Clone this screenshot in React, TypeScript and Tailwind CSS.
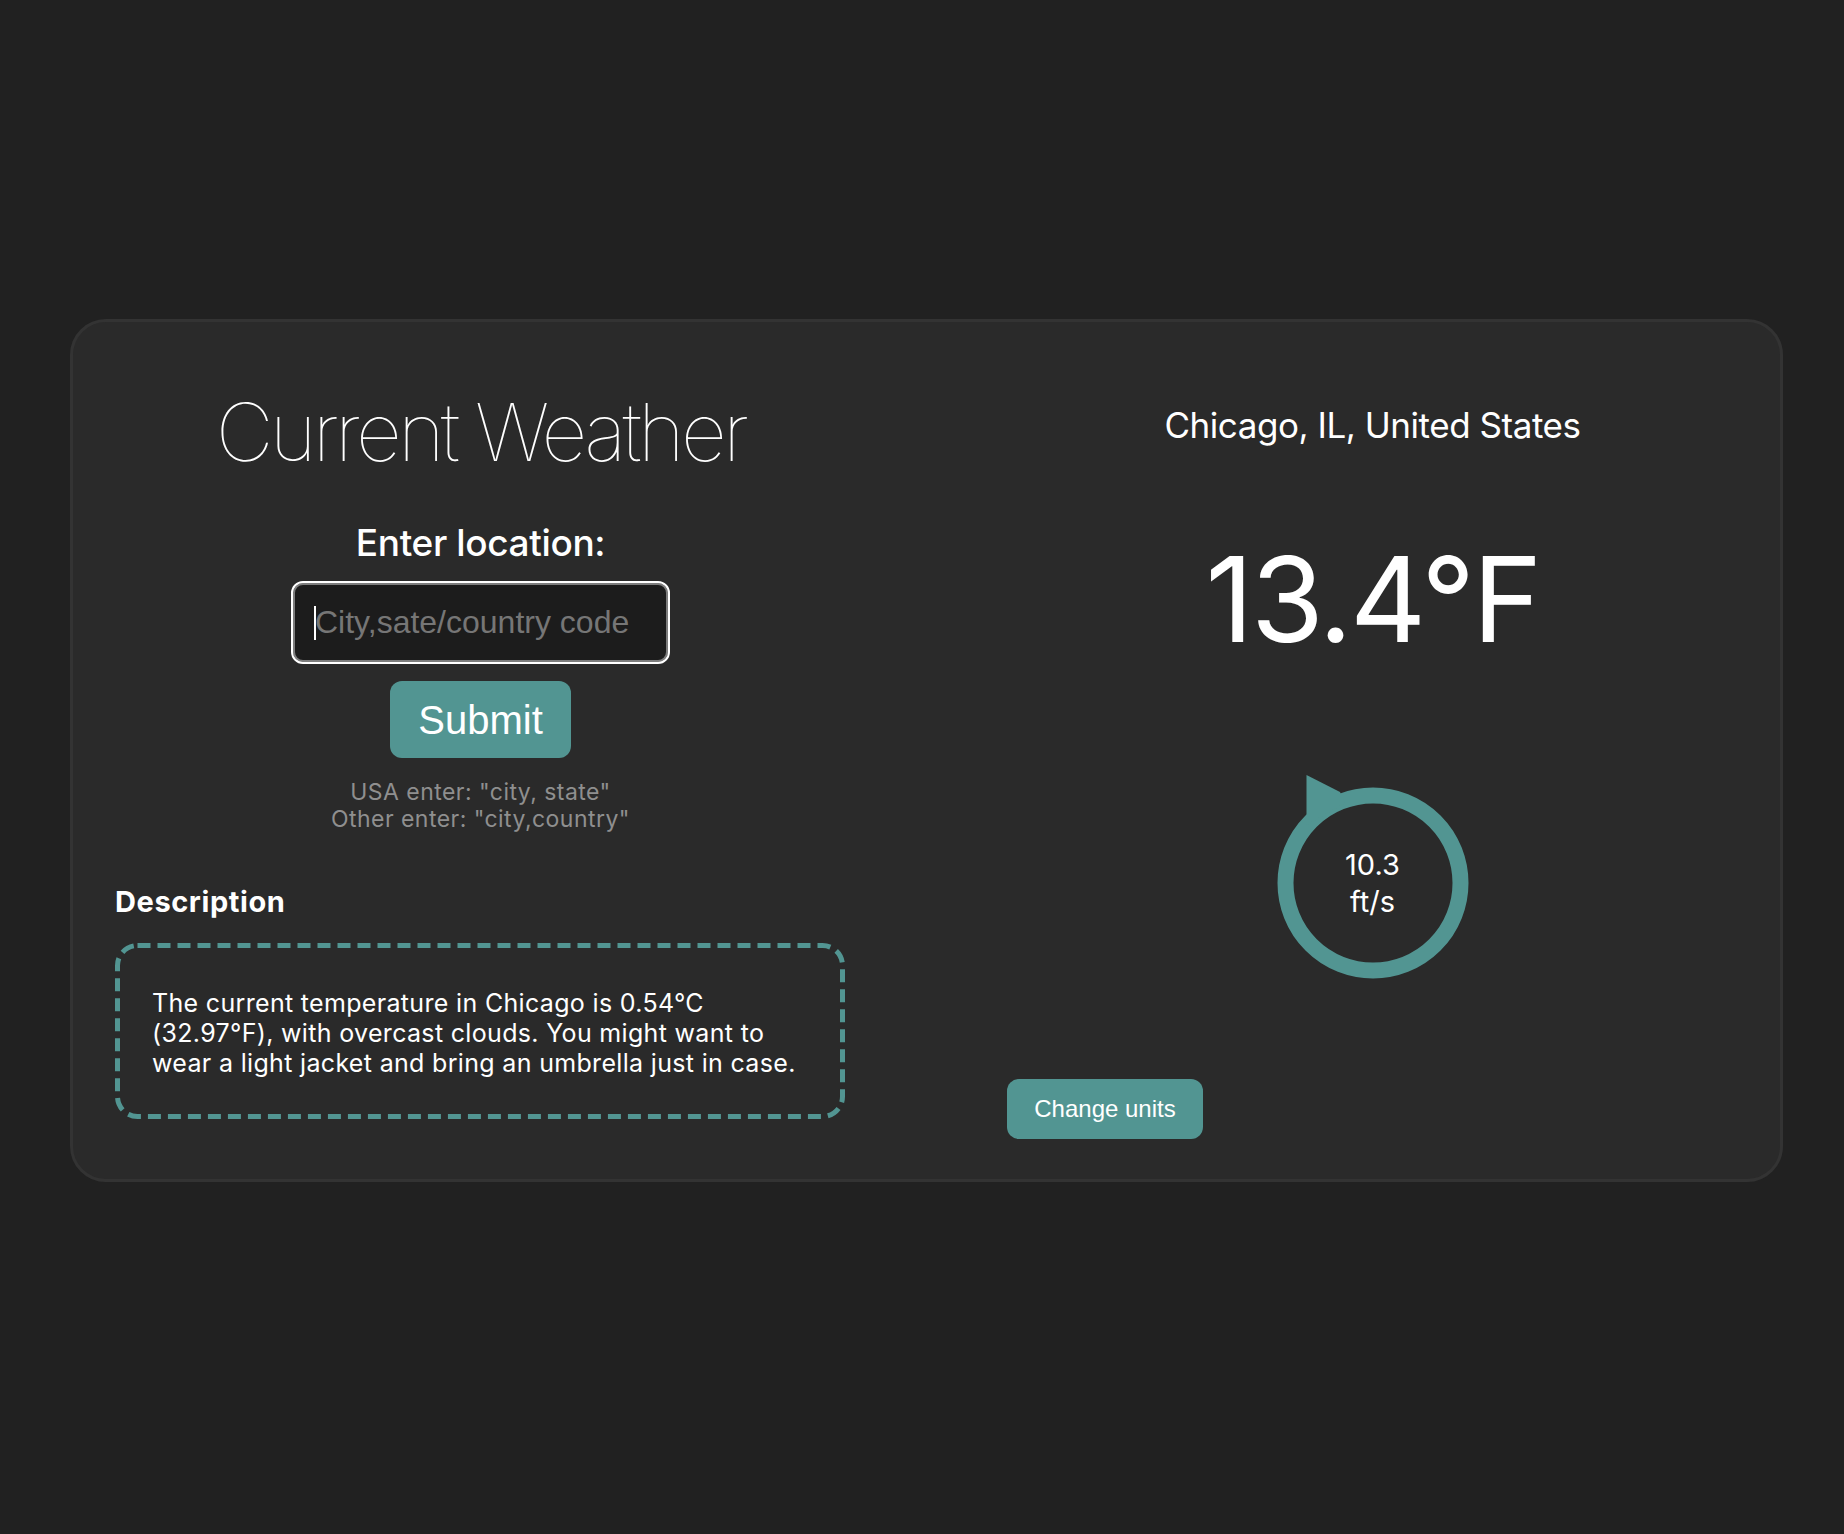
import { useState } from "react";

function WindDial({ speed, unit }: { speed: string; unit: string }) {
  return (
    <div className="relative mt-[105px] h-[240px] w-[240px] self-center">
      <svg width="240" height="240" viewBox="0 0 240 240" className="absolute inset-0">
        <circle cx="120" cy="120" r="87.5" fill="none" stroke="#529592" strokeWidth="16" />
        <polygon points="53.5,12 87,29 92,40 53.5,62" fill="#529592" />
      </svg>
      <div className="absolute inset-0 flex flex-col items-center justify-center text-[29px] leading-[37px] text-white">
        <span>{speed}</span>
        <span>{unit}</span>
      </div>
    </div>
  );
}

export default function App() {
  const [city, setCity] = useState("");

  return (
    <div className="min-h-screen w-full bg-[#212121] pt-[319px] pb-[352px] font-['Inter',sans-serif]">
      <div className="ml-[70px] w-[1713px] rounded-[36px] border-[3px] border-[#333333] bg-[#2a2a2a] px-[42px] pb-[40px]">
        <div className="grid grid-cols-[731px_731px] items-start justify-between">
          {/* left side: search */}
          <div className="flex flex-col">
            <h1 className="mt-[70px] text-center text-[80px] leading-[80px] font-thin tracking-[-0.047em] text-white">
              Current Weather
            </h1>
            <h2 className="mt-[52px] text-center text-[37px] leading-[37px] font-medium tracking-[-0.01em] text-white">
              Enter location:
            </h2>
            <div className="relative mt-[20px] self-center">
              <input
                value={city}
                onChange={(e) => setCity(e.target.value)}
                placeholder="City,sate/country code"
                className="h-[83px] w-[379px] rounded-[12px] border-2 border-white bg-[#1c1c1c] pl-[22px] font-['Liberation_Sans',Arial,sans-serif] text-[32px] text-white shadow-[inset_0_0_0_2px_#7d7d7d] outline-none placeholder:text-[#767676]"
              />
              {city === "" && (
                <span className="absolute left-[23px] top-[25px] h-[34px] w-[2px] bg-white" />
              )}
            </div>
            <button className="mt-[17px] h-[77px] w-[181px] self-center rounded-[12px] bg-[#529592] font-['Liberation_Sans',Arial,sans-serif] text-[40px] text-white">
              Submit
            </button>
            <p className="mt-[21px] text-center text-[23px] leading-[27px] tracking-[0.02em] text-[#8f8f8f]">
              USA enter: "city, state"
              <br />
              Other enter: "city,country"
            </p>
            <h3 className="mt-[54px] text-[29px] leading-[29px] font-bold tracking-[0.02em] text-white">
              Description
            </h3>
            <div className="relative mt-[27px] flex h-[176px] w-[730px] items-center pr-[30px] pl-[37px]">
              <svg width="730" height="176" className="absolute inset-0">
                <rect
                  x="2.5"
                  y="2.5"
                  width="725"
                  height="171"
                  rx="20"
                  fill="none"
                  stroke="#529592"
                  strokeWidth="5"
                  strokeDasharray="13 7"
                />
              </svg>
              <p className="relative mt-[4px] text-[25px] leading-[30px] tracking-[0.013em] text-white">
                The current temperature in Chicago is 0.54°C (32.97°F), with overcast clouds. You might
                want to wear a light jacket and bring an umbrella just in case.
              </p>
            </div>
          </div>

          {/* right side: results */}
          <div className="flex flex-col">
            <h2 className="mt-[86px] text-center text-[35px] leading-[35px] tracking-[-0.013em] text-white">
              Chicago, IL, United States
            </h2>
            <div className="mt-[97px] text-center text-[118px] leading-[118px] tracking-[-0.022em] text-white">
              13.4°F
            </div>
            <WindDial speed="10.3" unit="ft/s" />
            <button className="mt-[76px] h-[60px] w-[196px] rounded-[12px] bg-[#529592] font-['Liberation_Sans',Arial,sans-serif] text-[24px] text-white">
              Change units
            </button>
          </div>
        </div>
      </div>
    </div>
  );
}
